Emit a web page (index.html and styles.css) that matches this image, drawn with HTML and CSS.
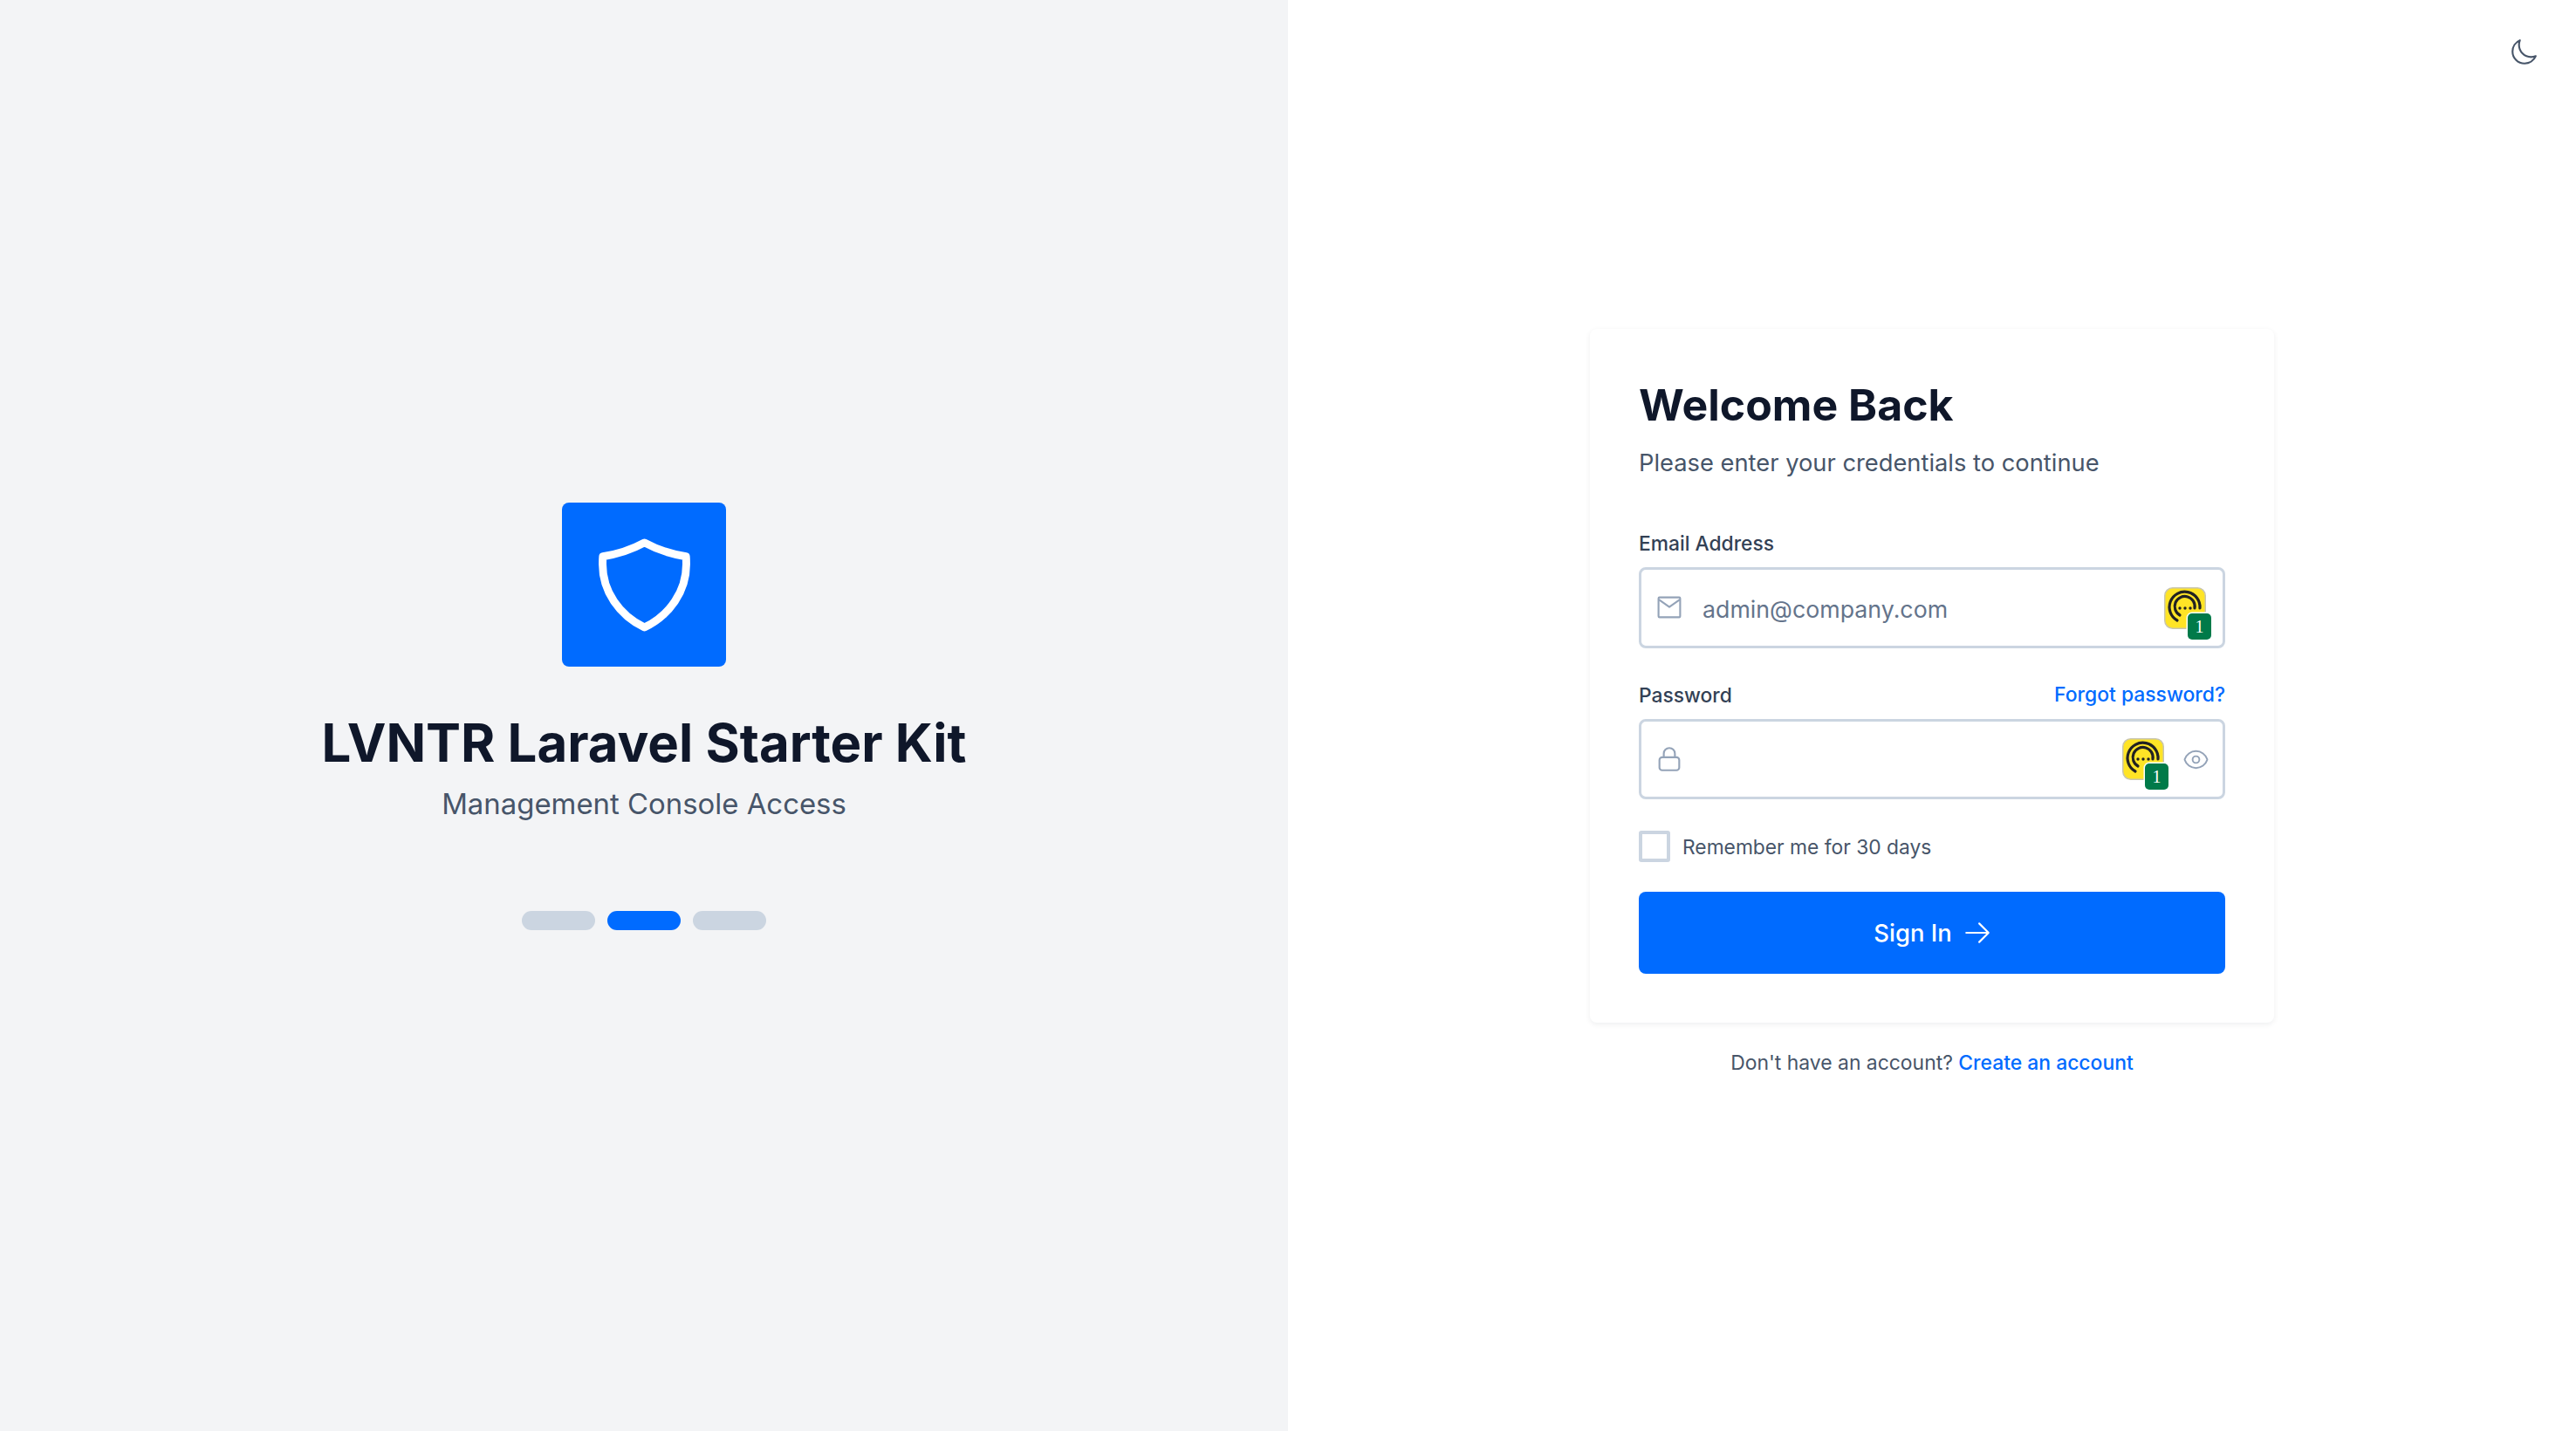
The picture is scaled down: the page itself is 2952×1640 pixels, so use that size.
FILE: index.html
```html
<!DOCTYPE html>
<html lang="en">
<head>
    <meta charset="UTF-8">
    <title>Sign In</title>
    <link rel="stylesheet" href="styles.css">
</head>
<body>
    <svg class="defs" width="0" height="0">
        <symbol id="onepass" viewBox="0 0 48 48">
            <rect x="0.75" y="0.75" width="46.5" height="46.5" rx="9" fill="#ffe426" stroke="#c9c6ae" stroke-width="1.5"/>
            <path d="M15 38A17.5 17.5 0 1 1 41 24" fill="none" stroke="#222" stroke-width="3.2" stroke-linecap="round"/>
            <path d="M18 32A11.500 11.500 0 1 1 35 24" fill="none" stroke="#222" stroke-width="3.2" stroke-linecap="round"/>
            <circle cx="18" cy="24" r="1.700" fill="#222"/>
            <circle cx="24" cy="24" r="1.700" fill="#222"/>
            <circle cx="30" cy="24" r="1.700" fill="#222"/>
        </symbol>
    </svg>
    <div class="page">
        <div class="brand">
            <div class="logo">
                <svg width="143" height="143" viewBox="0 0 24 24" fill="none" stroke="#fff" stroke-width="1.500" stroke-linecap="round" stroke-linejoin="round">
                    <path d="M12 3.850c2.200 1.200 5 2.200 8 2.650.050.500.050 1 .050 1.500 0 5.200-3.200 9.800-8.050 12.150C7.150 17.800 3.950 13.200 3.950 8c0-.500 0-1 .050-1.500 3-.450 5.800-1.450 8-2.650z"/>
                </svg>
            </div>
            <h1 class="brand-title">LVNTR Laravel Starter Kit</h1>
            <p class="brand-sub">Management Console Access</p>
            <div class="dots">
                <span class="dot"></span>
                <span class="dot active"></span>
                <span class="dot"></span>
            </div>
        </div>
        <div class="side">
            <button class="theme" type="button" aria-label="Toggle theme">
                <svg width="34" height="34" viewBox="0 0 24 24" fill="none" stroke="#475569" stroke-width="1.500" stroke-linecap="round" stroke-linejoin="round">
                    <path d="M21.752 15.002A9.720 9.720 0 0 1 18 15.750c-5.385 0-9.750-4.365-9.750-9.750 0-1.330.266-2.597.748-3.752A9.753 9.753 0 0 0 3 11.250C3 16.635 7.365 21 12.750 21a9.753 9.753 0 0 0 9.002-5.998z"/>
                </svg>
            </button>
            <div class="card">
                <h2 class="card-title">Welcome Back</h2>
                <p class="card-sub">Please enter your credentials to continue</p>
                <form class="form">
                    <div class="field">
                        <div class="label-row"><label class="label">Email Address</label></div>
                        <div class="input-box email-box">
                            <svg class="input-icon" width="34" height="34" viewBox="0 0 24 24" fill="none" stroke="#94a3b8" stroke-width="1.500" stroke-linejoin="round">
                                <rect x="3.250" y="3.300" width="17.500" height="16" rx="0.800"/>
                                <path d="M3.500 5 12 11l8.500-6"/>
                            </svg>
                            <input class="input" type="text" placeholder="admin@company.com">
                            <span class="onepass">
                                <svg width="48" height="48"><use href="#onepass"/></svg>
                                <span class="onepass-badge">1</span>
                            </span>
                        </div>
                    </div>
                    <div class="field">
                        <div class="label-row">
                            <label class="label">Password</label>
                            <a class="link" href="#">Forgot password?</a>
                        </div>
                        <div class="input-box pass-box">
                            <svg class="input-icon" width="34" height="34" viewBox="0 0 24 24" fill="none" stroke="#94a3b8" stroke-width="1.500" stroke-linejoin="round">
                                <path d="M7.500 10.500V7.500a4.500 4.500 0 0 1 9 0v3"/>
                                <rect x="4" y="10.500" width="16" height="10.500" rx="2.200"/>
                            </svg>
                            <input class="input" type="password">
                            <span class="onepass">
                                <svg width="48" height="48"><use href="#onepass"/></svg>
                                <span class="onepass-badge">1</span>
                            </span>
                            <svg class="eye" width="31" height="31" viewBox="0 0 24 24" fill="none" stroke="#94a3b8" stroke-width="1.500" stroke-linecap="round" stroke-linejoin="round">
                                <path d="M2.036 12.322a1.012 1.012 0 0 1 0-.639C3.423 7.510 7.360 4.500 12 4.500c4.638 0 8.573 3.007 9.963 7.178.070.207.070.431 0 .639C20.577 16.490 16.640 19.500 12 19.500c-4.638 0-8.573-3.007-9.963-7.178z"/>
                                <circle cx="12" cy="12" r="3"/>
                            </svg>
                        </div>
                    </div>
                    <label class="remember">
                        <span class="check"></span>
                        <span>Remember me for 30 days</span>
                    </label>
                    <button class="submit" type="button">
                        Sign In
                        <svg width="34" height="34" viewBox="0 0 24 24" fill="none" stroke="#fff" stroke-width="1.500" stroke-linecap="round" stroke-linejoin="round">
                            <path d="M3 12h18M13.500 4.500 21 12l-7.500 7.500"/>
                        </svg>
                    </button>
                </form>
            </div>
            <p class="signup">Don't have an account? <a class="link" href="#">Create an account</a></p>
        </div>
    </div>
</body>
</html>
```

FILE: styles.css
```css
*{
    margin:0;
    padding:0;
    box-sizing:border-box;
}
body{
    font-family:Inter,"Liberation Sans",sans-serif;
    background:#fff;
    color:#0f172a;
}
.defs{
    display:block;
    height:0;
}
.page{
    display:flex;
    height:1640px;
}
.brand{
    width:1476px;
    padding-top:2px;
    background:#f3f4f6;
    display:flex;
    flex-direction:column;
    align-items:center;
    justify-content:center;
}
.logo{
    width:188px;
    height:188px;
    background:#006bff;
    border-radius:8px;
    display:flex;
    align-items:center;
    justify-content:center;
}
.brand-title{
    margin-top:49px;
    font-size:59.900px;
    line-height:76px;
    font-weight:700;
    color:#0f172a;
}
.brand-sub{
    margin-top:6px;
    font-size:32.900px;
    line-height:52px;
    color:#475569;
}
.dots{
    display:flex;
    gap:14px;
    margin-top:97px;
}
.dot{
    width:84px;
    height:22px;
    border-radius:11px;
    background:#cbd5e1;
}
.dot.active{
    background:#006bff;
}
.side{
    flex:1;
    position:relative;
    display:flex;
    flex-direction:column;
    align-items:center;
    justify-content:center;
    padding-bottom:27px;
}
.theme{
    position:absolute;
    top:43px;
    right:43px;
    border:0;
    background:none;
    display:flex;
}
.card{
    width:784px;
    height:795px;
    padding:56px;
    background:#fff;
    border-radius:8px;
    box-shadow:0 2px 6px rgba(15,23,42,.07);
}
.card-title{
    font-size:50px;
    line-height:62px;
    font-weight:700;
    color:#0f172a;
}
.card-sub{
    margin-top:14px;
    font-size:27.300px;
    line-height:44px;
    color:#475569;
}
.form{
    display:flex;
    flex-direction:column;
    margin-top:51px;
}
.field{
    margin-bottom:35px;
}
.label-row{
    display:flex;
    justify-content:space-between;
    align-items:center;
    height:36px;
    margin-bottom:10px;
}
.label{
    font-size:22.800px;
    font-weight:500;
    color:#334155;
}
.link{
    font-size:22.900px;
    font-weight:500;
    color:#006bff;
    text-decoration:none;
}
.input-box{
    display:flex;
    align-items:center;
    height:93px;
    padding:0 15px;
    border:3px solid #cbd5e1;
    border-radius:8px;
    background:#fff;
}
.pass-box{
    height:92px;
}
.input{
    flex:1;
    min-width:0;
    margin-left:21px;
    padding-top:2px;
    border:0;
    outline:0;
    background:none;
    font-family:inherit;
    font-size:26.750px;
    color:#0f172a;
}
.input::placeholder{
    color:#64748b;
    opacity:1;
}
.onepass{
    position:relative;
    display:block;
    width:48px;
    height:48px;
    flex:none;
}
.email-box .onepass{
    margin-right:4px;
}
.pass-box .onepass{
    margin-right:21px;
}
.onepass-badge{
    position:absolute;
    right:-6px;
    bottom:-12px;
    width:27px;
    height:30px;
    border-radius:5px;
    background:#007a49;
    color:#fff;
    font-family:"Liberation Serif",serif;
    font-size:20px;
    line-height:30px;
    text-align:center;
    box-shadow:0 0 0 1.500px #fff;
}
.pass-box .onepass-badge{
    right:-5px;
    bottom:-11px;
}
.eye{
    flex:none;
}
.remember{
    display:flex;
    align-items:center;
    gap:14px;
    margin-top:1px;
    font-size:22.800px;
    color:#475569;
}
.check{
    width:36px;
    height:36px;
    border:4px solid #cbd5e1;
    border-radius:3px;
    background:#fff;
}
.submit{
    display:flex;
    align-items:center;
    justify-content:center;
    gap:12px;
    height:94px;
    margin-top:34px;
    padding-left:2px;
    border:0;
    border-radius:8px;
    background:#006bff;
    color:#fff;
    font-family:inherit;
    font-size:27.400px;
    font-weight:500;
}
.signup{
    margin-top:28px;
    font-size:22.900px;
    line-height:36px;
    color:#475569;
}
```
